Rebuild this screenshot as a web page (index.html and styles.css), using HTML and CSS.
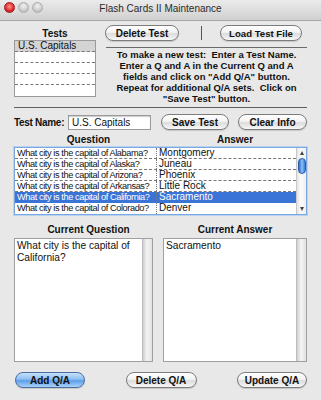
FILE: index.html
```html
<!DOCTYPE html>
<html>
<head>
<meta charset="utf-8">
<link rel="stylesheet" href="styles.css">
</head>
<body>
<div class="window">
  <div class="titlebar">
    <div class="lights">
      <span class="light red"></span>
      <span class="light"></span>
      <span class="light"></span>
    </div>
    <div class="title">Flash Cards II Maintenance</div>
  </div>
  <div class="content">
    <div class="top">
      <div class="tests">
        <div class="label">Tests</div>
        <div class="testlist">
          <div class="trow sel">U.S. Capitals</div>
          <div class="trow"></div>
          <div class="trow"></div>
          <div class="trow"></div>
          <div class="trow"></div>
        </div>
      </div>
      <div class="right">
        <div class="toprow">
          <button class="btn b-delete">Delete Test</button>
          <span class="vsep"></span>
          <button class="btn b-load">Load Test File</button>
        </div>
        <div class="instr">To make a new test:&nbsp; Enter a Test Name.<br>Enter a Q and A in the Current Q and A<br>fields and click on "Add Q/A" button.<br>Repeat for additional Q/A sets.&nbsp; Click on<br>"Save Test" button.</div>
      </div>
    </div>
    <div class="namerow">
      <span class="bold namelabel">Test Name:</span>
      <div class="input">U.S. Capitals</div>
      <button class="btn b-save">Save Test</button>
      <button class="btn b-clear">Clear Info</button>
    </div>
    <div class="heads">
      <div class="hq">Question</div>
      <div class="ha">Answer</div>
    </div>
    <div class="table">
      <div class="rows">
        <div class="row"><span class="q">What city is the capital of Alabama?</span><span class="a">Montgomery</span></div>
        <div class="row"><span class="q">What city is the capital of Alaska?</span><span class="a">Juneau</span></div>
        <div class="row"><span class="q">What city is the capital of Arizona?</span><span class="a">Phoenix</span></div>
        <div class="row"><span class="q">What city is the capital of Arkansas?</span><span class="a">Little Rock</span></div>
        <div class="row sel"><span class="q">What city is the capital of California?</span><span class="a">Sacramento</span></div>
        <div class="row"><span class="q">What city is the capital of Colorado?</span><span class="a">Denver</span></div>
      </div>
      <div class="vscroll">
        <span class="arr up"></span>
        <span class="thumb"></span>
        <span class="arr down"></span>
      </div>
    </div>
    <div class="heads heads2">
      <div class="hq">Current Question</div>
      <div class="ha">Current Answer</div>
    </div>
    <div class="areas">
      <div class="area aq"><div class="atext">What city is the capital of California?</div><div class="ascroll"></div></div>
      <div class="area aa"><div class="atext">Sacramento</div><div class="ascroll"></div></div>
    </div>
    <div class="bottom">
      <button class="btn blue b-add">Add Q/A</button>
      <button class="btn b-del">Delete Q/A</button>
      <button class="btn b-upd">Update Q/A</button>
    </div>
  </div>
</div>
</body>
</html>
```
FILE: styles.css
```css
* { box-sizing: border-box; }
html, body { margin: 0; padding: 0; }
body {
  width: 321px;
  height: 400px;
  background: #e8e8e8;
  font-family: "Liberation Sans", Arial, sans-serif;
  font-size: 10px;
  color: #111;
  overflow: hidden;
}
.window { width: 321px; height: 400px; background: #e8e8e8; }
.titlebar {
  height: 21px;
  position: relative;
  background: linear-gradient(#ebebeb, #d0d0d0);
  border-bottom: 1px solid #a8a8a8;
  display: flex;
  align-items: center;
  justify-content: center;
}
.lights { position: absolute; left: 4px; top: 2px; display: flex; gap: 3px; }
.light {
  width: 11px; height: 11px; border-radius: 50%;
  background: radial-gradient(circle at 50% 35%, #f2f2f2, #c4c4c4 70%, #a8a8a8);
  border: 1px solid #adadad;
}
.light.red {
  background: radial-gradient(circle at 50% 40%, #ff9090, #de2a2a 60%, #a50f0f);
  border-color: #9b1c1c;
}
.title { font-size: 10px; color: #2a2a2a; margin-top: -3px; }
.content { padding: 3px 14px 0 14px; }
.bold { font-weight: bold; }

.top { display: flex; gap: 10px; height: 84px; border-bottom: 1px solid #5e5e5e; }
.tests { width: 82px; }
.label { font-weight: bold; text-align: center; height: 15px; line-height: 15px; padding-top: 2px; box-sizing: content-box; }
.testlist { border: 1px solid #9a9a9a; background: #fff; height: 57px; margin-top: -1px; }
.trow { height: 11px; border-bottom: 1px dashed #777; line-height: 10px; padding-left: 3px; font-size: 10px; }
.trow:last-child { border-bottom: none; }
.trow.sel { background: #d4d4d4; }
.right { flex: 1; }
.toprow { display: flex; align-items: center; border-bottom: 1px solid #6a6a6a; padding-top: 1px; padding-bottom: 6px; box-sizing: content-box; height: 16px; }
.vsep { width: 1px; height: 14px; background: #555; margin: 1px 18px 0 22px; align-self: flex-start; }
.instr { font-weight: bold; text-align: center; line-height: 11px; font-size: 9.5px; padding-top: 1px; white-space: nowrap; }

.btn {
  font-family: inherit; font-weight: bold; font-size: 10px; color: #111;
  height: 16px; padding: 0; line-height: 13px;
  border: 1px solid #7c7c7c; border-radius: 8px;
  background: linear-gradient(#ffffff 0%, #f3f3f3 45%, #dcdcdc 55%, #f7f7f7 100%);
  box-shadow: 0 1px 1px rgba(0,0,0,0.15);
}
.btn.blue {
  background: linear-gradient(#c8e1fb 0%, #8cbdf1 45%, #5d9ee8 55%, #a9d3fb 100%);
  border-color: #4b6ea0;
}
.b-delete { width: 74px; margin-left: -1px; }
.b-load { width: 82px; font-size: 9.6px; }

.namerow { display: flex; align-items: center; height: 24px; padding-top: 4px; }
.namelabel { width: 54px; white-space: nowrap; font-size: 10px; letter-spacing: -0.3px; }
.input {
  width: 83px; height: 15px; background: #fff; border: 1px solid #9a9a9a;
  line-height: 13px; padding-left: 3px;
  box-shadow: inset 0 1px 1px rgba(0,0,0,0.2);
}
.b-save { width: 68px; margin-left: 10px; }
.b-clear { width: 69px; margin-left: 9px; }

.heads { display: flex; font-weight: bold; height: 14px; line-height: 13px; margin-top: 1px; }
.hq { width: 149px; text-align: center; }
.ha { flex: 1; text-align: center; }

.table {
  display: flex; height: 68px; background: #fff;
  border: 1px solid #7aa7de; box-shadow: 0 0 0 1px #b9d2f0;
}
.rows { flex: 1; }
.row { display: flex; height: 11px; border-bottom: 1px dashed #777; line-height: 10px; white-space: nowrap; overflow: hidden; }
.row .q { width: 142px; padding-left: 2px; border-right: 1px dotted #777; overflow: hidden; font-size: 9.2px; letter-spacing: -0.4px; }
.row .a { padding-left: 2px; font-size: 10px; }
.row.sel { background: #3a74d6; color: #fff; border-bottom-color: #3a74d6; }
.row:last-child { border-bottom: none; }
.vscroll {
  width: 10px; display: flex; flex-direction: column; align-items: center;
  background: linear-gradient(90deg, #e4e4e4, #fafafa 40%, #f0f0f0);
  border-left: 1px solid #c8c8c8;
}
.arr { width: 0; height: 0; border-left: 2.5px solid transparent; border-right: 2.5px solid transparent; }
.arr.up { border-bottom: 4px solid #444; margin-top: 3px; }
.arr.down { border-top: 4px solid #444; margin-top: auto; margin-bottom: 3px; }
.thumb {
  width: 8px; height: 16px; margin-top: 3px; border-radius: 4px;
  background: linear-gradient(90deg, #2f6ad0, #8ec0f5 50%, #3b78d8);
  border: 1px solid #2d5ca8;
}

.heads2 { margin-top: 8px; }
.areas { display: flex; gap: 10px; margin-top: 1px; height: 124px; }
.area { display: flex; border: 1px solid #a0a0a0; background: #fff; }
.aq { width: 139px; }
.aa { width: 144px; }
.atext { flex: 1; padding: 1px 2px; font-size: 10.2px; line-height: 12px; }
.ascroll { width: 10px; background: linear-gradient(90deg, #cfcfcf, #f4f4f4 45%, #e0e0e0); border-left: 1px solid #bdbdbd; }

.bottom { display: flex; justify-content: space-between; margin-top: 10px; padding-left: 1px; }
.b-add { width: 70px; }
.b-del { width: 71px; }
.b-upd { width: 70px; }
```
